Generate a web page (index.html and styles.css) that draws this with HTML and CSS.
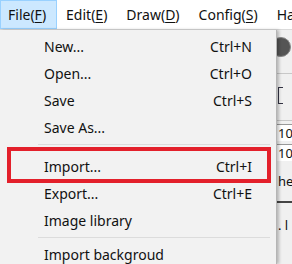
FILE: index.html
```html
<!DOCTYPE html>
<html lang="en">
<head>
  <meta charset="UTF-8">
  <title>File menu</title>
  <link rel="stylesheet" href="styles.css">
</head>
<body>

  <div class="menubar">
    <span class="top-item active">File(<u>F</u>)</span>
    <span class="top-item">Edit(<u>E</u>)</span>
    <span class="top-item">Draw(<u>D</u>)</span>
    <span class="top-item">Config(<u>S</u>)</span>
    <span class="top-item">Ha</span>
  </div>

  <div class="work">
    <div class="dropdown">
      <div class="row"><span>New...</span><span class="key">Ctrl+N</span></div>
      <div class="row"><span>Open...</span><span class="key">Ctrl+O</span></div>
      <div class="row"><span>Save</span><span class="key">Ctrl+S</span></div>
      <div class="row"><span>Save As...</span><span class="key"></span></div>
      <div class="sep wide"></div>
      <div class="row"><span>Import...</span><span class="key">Ctrl+I</span></div>
      <div class="row"><span>Export...</span><span class="key">Ctrl+E</span></div>
      <div class="row"><span>Image library</span><span class="key"></span></div>
      <div class="sep"></div>
      <div class="row last"><span>Import backgroud</span><span class="key"></span></div>

      <div class="highlight"></div>
    </div>

    <div class="side">
      <div class="knob"></div>
      <div class="rule"></div>
      <div class="bracket"></div>
      <div class="rule"></div>
      <div class="field">100</div>
      <div class="field">100</div>
      <div class="field plain">hec</div>
      <div class="rule dark"></div>
      <div class="field plain">. l</div>
    </div>
  </div>

</body>
</html>
```

FILE: styles.css
```css
body {
  margin: 0;
  font-family: "Noto Sans", "Open Sans", sans-serif;
  font-size: 14px;
  color: #111;
  background: #f0f0f0;
  overflow: hidden;
}

u {
  text-decoration-thickness: 1px;
  text-underline-offset: 2px;
}

.menubar {
  display: flex;
  height: 30px;
  background: #fff;
  border-bottom: 1px solid #dadada;
  box-sizing: border-box;
  white-space: nowrap;
  overflow: hidden;
}

.top-item {
  display: flex;
  align-items: center;
  padding: 0 10px 0 9px;
}

.top-item.active {
  background: #cce8ff;
  border: 1px solid #99d1ff;
  padding: 0 10px 0 7px;
}

.work {
  display: flex;
  height: 234px;
}

.dropdown {
  position: relative;
  width: 277px;
  flex: none;
  padding-top: 3px;
  background: #f2f2f2;
  border-right: 1px solid #b5b5b5;
  box-shadow: 2px 0 3px rgba(0,0,0,0.25);
  box-sizing: border-box;
  z-index: 1;
}

.row {
  display: flex;
  justify-content: space-between;
  align-items: center;
  height: 27px;
  padding: 0 24px 0 44px;
}

.row.last {
  height: 24px;
}

.sep {
  height: 8px;
  margin-left: 38px;
  margin-right: 6px;
  background: linear-gradient(#dcdcdc, #dcdcdc) no-repeat 0 3px / 100% 1px;
}

.sep.wide {
  height: 12px;
}

.highlight {
  position: absolute;
  left: 7px;
  top: 117px;
  width: 264px;
  height: 36px;
  border: 4px solid #e3202b;
  box-sizing: border-box;
}

.side {
  flex: 1;
  display: flex;
  flex-direction: column;
  padding-top: 7px;
  overflow: hidden;
  white-space: nowrap;
  font-size: 13px;
}

.knob {
  width: 18px;
  height: 18px;
  margin-left: -6px;
  border-radius: 50%;
  background: #555;
  border: 1px solid #888;
}

.rule {
  height: 1px;
  margin: 16px 0 0;
  background: #c8c8c8;
}

.rule.dark {
  height: 2px;
  margin: 12px 0 2px;
  background: #444;
}

.bracket {
  width: 4px;
  height: 15px;
  margin: 13px 0 0 1px;
  border: 1px solid #334;
  border-right: none;
}

.field {
  height: 16px;
  line-height: 16px;
  margin-top: 3px;
  background: #fff;
  border-top: 1px solid #999;
  padding-left: 1px;
}

.field.plain {
  background: none;
  border: none;
  margin-top: 12px;
}
```
